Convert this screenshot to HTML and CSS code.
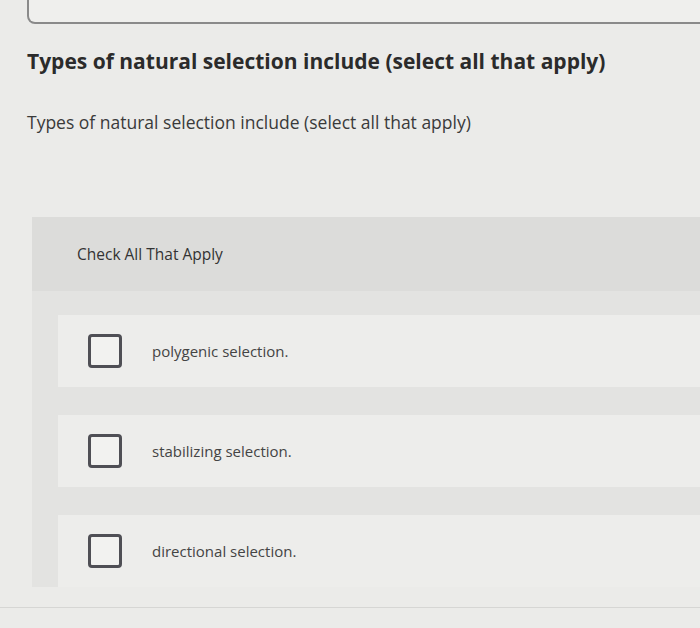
FILE: index.html
```html
<!DOCTYPE html>
<html lang="en">
<head>
    <meta charset="UTF-8">
    <meta name="viewport" content="width=device-width, initial-scale=1.0">
    <title>Check All That Apply</title>
    <link rel="stylesheet" href="styles.css">
</head>
<body>
    <div class="top-box"></div>

    <h1 class="question-title">Types of natural selection include (select all that apply)</h1>
    <p class="question-text">Types of natural selection include (select all that apply)</p>

    <div class="answer-panel">
        <div class="panel-head">Check All That Apply</div>
        <div class="options">
            <label class="option">
                <span class="box"></span>
                <span class="option-text">polygenic selection.</span>
            </label>
            <label class="option">
                <span class="box"></span>
                <span class="option-text">stabilizing selection.</span>
            </label>
            <label class="option">
                <span class="box"></span>
                <span class="option-text">directional selection.</span>
            </label>
        </div>
    </div>
    <div class="bottom-line"></div>
</body>
</html>
```

FILE: styles.css
```css
body {
    margin: 0;
    padding: 0 0 0 27px;
    font-family: 'Open Sans', 'Liberation Sans', sans-serif;
    background: #ebebe9;
    color: #333;
    overflow: hidden;
}

.top-box {
    height: 22px;
    margin-right: -20px;
    border: 2px solid #8a8a8a;
    border-top: none;
    border-radius: 0 0 0 8px;
    background: #efefed;
}

.question-title {
    margin: 23px 0 0;
    font-size: 21px;
    font-weight: bold;
    color: #2b2b2b;
    line-height: 28px;
}

.question-text {
    margin: 36px 0 0;
    font-size: 17.5px;
    color: #3a3a3a;
    line-height: 22px;
}

.answer-panel {
    margin: 84px 0 0 5px;
    background: #e3e3e1;
}

.panel-head {
    height: 74px;
    padding-left: 45px;
    display: flex;
    align-items: center;
    font-size: 15.5px;
    color: #333;
    background: #dcdcda;
}

.options {
    padding: 24px 0 0 26px;
    display: flex;
    flex-direction: column;
    gap: 28px;
}

.option {
    display: flex;
    align-items: center;
    height: 72px;
    padding-left: 30px;
    background: #ededeb;
}

.box {
    width: 28px;
    height: 28px;
    border: 3px solid #4f4f55;
    border-radius: 4px;
    background: #f2f2f0;
    flex-shrink: 0;
}

.option-text {
    margin-left: 30px;
    font-size: 15px;
    color: #444;
}

.bottom-line {
    margin: 20px 0 0 -27px;
    border-top: 1px solid #d6d6d4;
}
```
